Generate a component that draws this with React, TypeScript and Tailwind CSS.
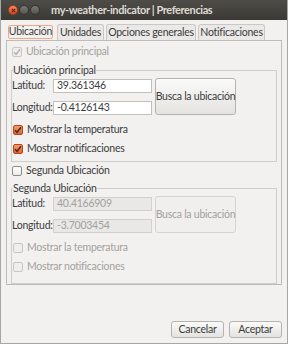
import React from "react";

function Box({ checked, disabled }: { checked?: boolean; disabled?: boolean }) {
  let cls = "border-[#8e8c88] bg-gradient-to-b from-[#ffffff] to-[#ecebe9]";
  if (checked && !disabled) cls = "border-[#b9461c] bg-gradient-to-b from-[#f49a6a] to-[#e0622f]";
  if (disabled) cls = "border-[#c9c7c3] bg-[#efeeed]";
  return (
    <span className={`flex h-[10px] w-[10px] shrink-0 items-center justify-center rounded-[2px] border ${cls}`}>
      {checked && (
        <svg width="8" height="8" viewBox="0 0 8 8">
          <path
            d="M1 4.2 L3.1 6.3 L7 1.3"
            fill="none"
            stroke={disabled ? "#b5b3af" : "#4a2a1c"}
            strokeWidth="1.5"
          />
        </svg>
      )}
    </span>
  );
}

function CheckRow({
  label,
  checked,
  disabled,
  className = "",
}: {
  label: string;
  checked?: boolean;
  disabled?: boolean;
  className?: string;
}) {
  return (
    <div className={`flex h-[14px] items-center gap-[4px] whitespace-nowrap ${className}`}>
      <Box checked={checked} disabled={disabled} />
      <span className={disabled ? "text-[#a3a19d]" : ""}>{label}</span>
    </div>
  );
}

function Field({ label, value, disabled }: { label: string; value: string; disabled?: boolean }) {
  return (
    <div className="flex h-[14px] items-center whitespace-nowrap">
      <span className="w-[41px]">{label}</span>
      <div
        className={`flex h-[14px] w-[99px] items-center border px-[3px] ${
          disabled ? "border-[#d2d0cc] bg-[#e9e8e6] text-[#a3a19d]" : "border-[#c2c0bc] bg-white"
        }`}
      >
        {value}
      </div>
    </div>
  );
}

function LocationFrame({
  title,
  lat,
  lon,
  disabled,
  bottom,
}: {
  title: string;
  lat: string;
  lon: string;
  disabled?: boolean;
  bottom: string;
}) {
  return (
    <fieldset className={`border border-[#cfcdc9] px-0 pt-0 ${bottom}`}>
      <legend className="ml-[1px] h-[14px] leading-[14px]">{title}</legend>
      <div className="mt-[1px] flex items-start">
        <div className="flex flex-col gap-[8px] pt-[1px]">
          <Field label="Latitud:" value={lat} disabled={disabled} />
          <Field label="Longitud:" value={lon} disabled={disabled} />
        </div>
        <div
          className={`ml-[3px] flex h-[37px] w-[81px] items-center justify-center whitespace-nowrap rounded-[3px] border ${
            disabled
              ? "border-[#d6d4d0] bg-[#f0efed] text-[#a3a19d]"
              : "border-[#b5b3af] bg-gradient-to-b from-[#fafaf9] to-[#e4e3e0]"
          }`}
        >
          Busca la ubicación
        </div>
      </div>
      <CheckRow className="ml-[1px] mt-[8px]" label="Mostrar la temperatura" checked={!disabled} disabled={disabled} />
      <CheckRow className="ml-[1px] mt-[5px]" label="Mostrar notificaciones" checked={!disabled} disabled={disabled} />
    </fieldset>
  );
}

function Tab({ label, width, active }: { label: string; width: string; active?: boolean }) {
  if (active) {
    return (
      <div className={`flex h-[16px] ${width} items-center justify-center`}>
        <div className="flex h-[14px] w-[45px] items-center justify-center rounded-[2px] border border-[#f0a688]">
          {label}
        </div>
      </div>
    );
  }
  return (
    <div
      className={`flex h-[16px] ${width} items-center justify-center whitespace-nowrap rounded-t-[3px] border border-b-0 border-[#cac8c4] bg-[#eae9e7]`}
    >
      {label}
    </div>
  );
}

export default function App() {
  return (
    <div className="flex h-[344px] w-[288px] flex-col border-x border-b border-[#a7a6a3] bg-[#f2f1f0] font-['Lato',sans-serif] text-[10.5px] tracking-[-0.25px] text-[#3c3c3c]">
      <div className="flex h-[20px] shrink-0 items-center bg-gradient-to-b from-[#4d4c47] to-[#3a3935] pl-[7px]">
        <div className="flex gap-[1px]">
          <span className="relative h-[10px] w-[10px] rounded-full border border-[#a8401c] bg-gradient-to-b from-[#f58a5a] to-[#d9471a]">
            <svg className="absolute left-[1.5px] top-[1.5px]" width="5" height="5" viewBox="0 0 5 5">
              <path d="M0.8 0.8 L4.2 4.2 M4.2 0.8 L0.8 4.2" stroke="#5a2614" strokeWidth="1.1" />
            </svg>
          </span>
          <span className="h-[10px] w-[10px] rounded-full border border-[#34332f] bg-gradient-to-b from-[#7b7a74] to-[#55544f]" />
          <span className="h-[10px] w-[10px] rounded-full border border-[#34332f] bg-gradient-to-b from-[#7b7a74] to-[#55544f]" />
        </div>
        <span className="ml-[11px] whitespace-nowrap text-[11px] font-bold tracking-[-0.4px] text-[#dfdbd2]">
          my-weather-indicator | Preferencias
        </span>
      </div>

      <div className="mt-[4px] flex gap-[2px] pl-[5px]">
        <Tab label="Ubicación" width="w-[49px]" active />
        <Tab label="Unidades" width="w-[47px]" />
        <Tab label="Opciones generales" width="w-[90px]" />
        <Tab label="Notificaciones" width="w-[67px]" />
      </div>

      <div className="mx-[5px] flex h-[245px] flex-col border border-[#bebcb8] px-[4px]">
        <CheckRow className="ml-[1px] mt-[4px]" label="Ubicación principal" checked disabled />
        <div className="mt-[4px]">
          <LocationFrame title="Ubicación principal" lat="39.361346" lon="-0.4126143" bottom="pb-[5px]" />
        </div>
        <CheckRow className="ml-[1px] mt-[2px]" label="Segunda Ubicación" />
        <div className="mt-[3px]">
          <LocationFrame
            title="Segunda Ubicación"
            lat="40.4166909"
            lon="-3.7003454"
            disabled
            bottom="pb-[9px]"
          />
        </div>
      </div>

      <div className="mt-auto flex justify-end gap-[5px] pb-[5px] pr-[5px]">
        <div className="flex h-[17px] w-[53px] items-center justify-center rounded-[3px] border border-[#b5b3af] bg-gradient-to-b from-[#fafaf9] to-[#e4e3e0]">
          Cancelar
        </div>
        <div className="flex h-[17px] w-[53px] items-center justify-center rounded-[3px] border border-[#b5b3af] bg-gradient-to-b from-[#fafaf9] to-[#e4e3e0]">
          Aceptar
        </div>
      </div>
    </div>
  );
}
